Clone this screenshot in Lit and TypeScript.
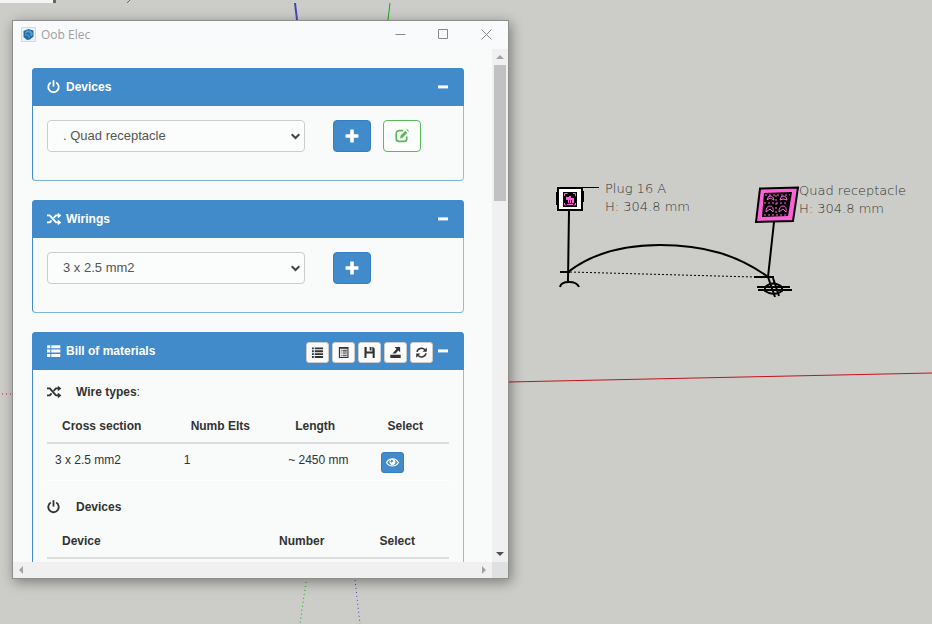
import { LitElement, html, css, svg, nothing } from "lit";
import { customElement, property } from "lit/decorators.js";

const icons: Record<string, unknown> = {
  power: svg`<path d="M3.800 2.600A5.200 5.200 0 1 0 9.200 2.600" fill="none" stroke="currentColor" stroke-width="1.8"/><path d="M5.600.2h1.800v6.400H5.600z"/>`,
  shuffle: svg`<path d="M0 3.4h2.8L9 10.4h2.6M0 10.4h2.8l1.8-2M6.6 5.8 9 3.4h2.6" fill="none" stroke="currentColor" stroke-width="1.9"/><path d="M10.8.8 14.4 3.5 10.8 6.2zM10.8 7.6l3.6 2.8-3.6 2.8z"/>`,
  thlist: svg`<path d="M0 1.200h3.300v3H0zM4.300 1.200h9v3h-9zM0 5.600h3.300v3H0zM4.300 5.600h9v3h-9zM0 10h3.300v3H0zM4.300 10h9v3h-9z"/>`,
  minus: svg`<path d="M2 5.4h10v3H2z"/>`,
  plus: svg`<path d="M5.2.6h3.6v4.6h4.6v3.6H8.8v4.6H5.2V8.8H.6V5.2h4.6z"/>`,
  edit: svg`<path d="M8.400 1.600H4.200A3 3 0 0 0 1.200 4.600v4.800a3 3 0 0 0 3 3h4.600a3 3 0 0 0 3-3V7.400" fill="none" stroke="currentColor" stroke-width="1.700"/><path d="M5 9.600l.6-3L10.400 1.700l2 2L7.600 8.700zM11.400.8l.7-.7 1.900 1.900-.7.700z"/>`,
  list: svg`<path d="M1 1.6h2v2H1zM4 1.6h9v2H4zM1 4.7h2v2H1zM4 4.7h9v2H4zM1 7.8h2v2H1zM4 7.8h9v2H4zM1 10.9h2v2H1zM4 10.9h9v2H4z"/>`,
  listalt: svg`<path d="M2 1h10.4v12H2zM3.2 3v8.8h8V3z" fill-rule="evenodd"/><path d="M4 4h1v1H4zM6 4h4.6v1H6zM4 6h1v1H4zM6 6h4.6v1H6zM4 8h1v1H4zM6 8h4.6v1H6zM4 10h1v1H4zM6 10h4.6v1H6z"/>`,
  save: svg`<path d="M1.600 1h2.400v5h6V1h.8L12.600 2.800v10.200h-2.200V8.200H3.800V13H1.600zM7.200 1h2v3.800h-2z"/>`,
  open: svg`<path d="M1.4 9.4h11.2v3.4H1.4zM6 1.2h6v5.6l-1.9-1.9-3 3.3H3.8l4.3-5z"/>`,
  refresh: svg`<path d="M2.2 6.4A4.8 4.6 0 0 1 10.6 4M11.8 7.8A4.8 4.6 0 0 1 3.4 10.2" fill="none" stroke="currentColor" stroke-width="1.7"/><path d="M12.7 1.6v4.6H8.2zM1.3 12.6V8h4.5z"/>`,
  eye: svg`<path d="M.6 7C3.6 1.7 10.4 1.7 13.4 7 10.4 12 3.6 12 .6 7z" fill="none" stroke="currentColor" stroke-width="1.3"/><path d="M7 3.2a3.3 3.3 0 1 0 .01 0zM5.6 4.2a1.4 1.4 0 1 1-.8 2z" fill-rule="evenodd"/>`,
};

const icon = (name: string) =>
  html`<svg class="icon" viewBox="0 0 14 14" aria-hidden="true">${icons[name]}</svg>`;

const iconStyles = css`
  .icon { width: 14px; height: 14px; fill: currentColor; display: block; overflow: visible; flex: none; }
  button { font: inherit; padding: 0; margin: 0; display: flex; align-items: center; justify-content: center; box-sizing: border-box; cursor: pointer; }
`;

@customElement("oob-panel")
class OobPanel extends LitElement {
  @property() heading = "";
  @property() glyph = "";
  static styles = [iconStyles, css`
    :host { display: block; }
    .panel { border: 1px solid #428bca; border-right-color: #8fbde0; border-bottom-color: #7fb2de; border-radius: 4px; background: #f9fafa; }
    .head { display: flex; align-items: center; height: 38px; margin: -1px -1px 0; padding: 0 14px 0 15px; box-sizing: border-box; background: #428bca; color: #fff; border-radius: 4px 4px 0 0; }
    h2 { margin: 0 auto 0 5px; font-size: 12px; line-height: 16px; font-weight: bold; }
    .fold { border: 0; background: none; color: #fff; }
    .body { padding: 14px 14px 28px; }
  `];
  render() {
    return html`<section class="panel">
      <header class="head">${icon(this.glyph)}<h2>${this.heading}</h2><slot name="tools"></slot>
        <button class="fold" aria-label="Collapse ${this.heading}">${icon("minus")}</button></header>
      <div class="body"><slot></slot></div>
    </section>`;
  }
}

@customElement("plan-scene")
class PlanScene extends LitElement {
  static styles = css`
    :host { display: block; }
    svg { display: block; width: 100%; height: 100%; }
    .label { font: 200 13px "DejaVu Sans", sans-serif; fill: #333; }
    .ink { fill: none; stroke: #000; stroke-width: 2; }
    .thin { fill: none; stroke: #000; stroke-width: 1; }
    .dots { stroke-dasharray: 2 2; }
    .axis { stroke-width: 1; fill: none; }
    .far { stroke-dasharray: 1 3; }
    .red { stroke: #c0151b; }
    .green { stroke: #18a818; }
    .blue { stroke: #4646b8; }
    .bold { stroke-width: 2; }
    .pink { fill: #ff62d8; }
    .pinkline { fill: none; stroke: #ff62d8; stroke-width: 1; }
  `;
  render() {
    return html`<svg role="img" aria-label="Electrical plan">
      <path d="M0 0h53v3H0z" fill="#f4f4f4"/><path d="M53 0h3v3h-3z" fill="#666"/>
      <path class="axis green" d="M127 3l3-3M390 3l-2 17"/>
      <path class="axis green far" d="M306 582l-6 42"/>
      <path class="axis blue bold" d="M295 3l2 17"/>
      <path class="axis blue far" d="M355 580l5 44"/>
      <path class="axis red far" d="M2 394h11"/>
      <path class="axis red" d="M508 382L932 373"/>
      <path class="ink" d="M569 211l-1 70M560 272h10M560 287q1-5 9-5t10 5"/>
      <path class="ink" d="M568 272C594 252 626 245 660 245C704 245 738 255 768 277"/>
      <path class="thin dots" d="M570 272L754 277"/>
      <path class="thin" d="M560 187.5h39"/>
      <path d="M558 188h24v22h-24z" fill="#fff" stroke="#000" stroke-width="2"/>
      <path class="ink" d="M557 192v13M583 191v11"/>
      <path d="M563 192h14v15h-14z"/>
      <path class="pinkline" d="M564.500 196v-2.500h3M573 193.500h2.500v2.500M564.500 203v2h2M575.500 203v2h-2M567 204.500h6"/>
      <path class="pink" d="M566 197h3v-1h2v2h3v5h-2v-3h-1v3h-1v-3h-1v3h-1v-3h-2z"/>
      <path class="pink" d="M760 188.500l38-1-5 33.500-37 1z" stroke="#000" stroke-width="2"/>
      <path d="M764 193l28-1-4 24-26 1z"/>
      <g class="pinkline">
        <path d="M767 200q1-5 4-4t3 4l-4-2zM780 200q1-5 4-4t3 4l-4-1zM766 212q0-6 4-6t3 6l-3-3zM779 212q0-6 4-6t3 6l-3-3z"/>
        <path class="dots" d="M765 195h25M764 203h24M764 215h23M776 195v20"/>
      </g>
      <path class="ink" d="M774 222l-6 55M754 277h20M768 277l7 20M773 278l6 18M757 287h33M758 290h34M765 287q8-7 17 0v4q-8 6-17 0z"/>
      <text class="label" x="605" y="193">Plug 16 A</text>
      <text class="label" x="605" y="211">H: 304.8 mm</text>
      <text class="label" x="799" y="195">Quad receptacle</text>
      <text class="label" x="799" y="213">H: 304.8 mm</text>
    </svg>`;
  }
}

const tools: [string, string][] = [
  ["list", "Show list"], ["listalt", "Show details"], ["save", "Save"], ["open", "Export"], ["refresh", "Refresh"],
];

@customElement("app-root")
class AppRoot extends LitElement {
  static styles = [iconStyles, css`
    :host { display: block; position: relative; min-height: 100vh; overflow: hidden; background: #cccdc8; font: 12px/16px "Liberation Sans", Arial, sans-serif; color: #333; }
    plan-scene { position: absolute; inset: 0; }
    .window { position: absolute; left: 12px; top: 20px; width: 497px; height: 559px; box-sizing: border-box; display: flex; flex-direction: column; background: #f9fafa; border: 1px solid #8e8e8c; box-shadow: 2px 3px 12px rgba(0, 0, 0, 0.4); }
    .titlebar { display: flex; align-items: center; height: 28px; flex: none; padding: 0 8px 2px; box-sizing: border-box; background: #f9fafc; }
    .logo { width: 15px; height: 15px; }
    h1 { margin: 0 auto 0 5px; padding-top: 1px; font: 12px/16px "Open Sans", sans-serif; color: #a0a0a0; }
    .titlebar button { width: 43px; height: 26px; border: 0; background: none; color: #8a8a8a; }
    .titlebar button:last-child { margin-right: -8px; }
    .titlebar .glyph { width: 11px; height: 11px; fill: none; stroke: currentColor; }
    .frame { flex: 1; min-height: 0; display: grid; grid-template-columns: 1fr 16px; grid-template-rows: 1fr 16px; }
    .content { overflow: hidden; min-height: 0; padding: 19px 28px 0 19px; display: flex; flex-direction: column; gap: 19px; }
    .vbar, .hbar { background: #f0f0f0; display: flex; justify-content: space-between; align-items: center; }
    .vbar { flex-direction: column; }
    .thumb { width: 12px; height: 136px; background: #c1c1c1; margin-bottom: auto; }
    .corner { background: #dfe0e0; }
    .arrow { width: 16px; height: 16px; fill: #a3a3a3; display: block; }
    .dark { fill: #505050; }
    .row { display: flex; align-items: center; gap: 12px; }
    .pick { position: relative; width: 258px; margin-right: 16px; }
    select { appearance: none; width: 100%; height: 32px; display: block; box-sizing: border-box; border: 1px solid #ccc; border-radius: 4px; background: #fbfcfc; padding: 0 15px; font: 13px/16px "Liberation Sans", Arial, sans-serif; color: #555; }
    .chevron { position: absolute; right: 5px; top: 13px; width: 9px; height: 7px; fill: none; stroke: #444; stroke-width: 2; pointer-events: none; }
    .add, .edit { width: 38px; height: 32px; border-radius: 4px; border: 1px solid #357ebd; background: #428bca; color: #fff; }
    .edit { border-color: #5cb85c; background: #fcfefc; color: #5cb85c; }
    .tools { display: flex; gap: 3px; margin-right: 3px; }
    .tools button { width: 23px; height: 21px; border: 1px solid #ccc; border-radius: 3px; background: #fbfbfb; color: #333; margin-top: 2px; }
    h3 { display: flex; align-items: center; gap: 15px; margin: 0; font-size: 12px; line-height: 16px; }
    .tools .icon, .see .icon { width: 13px; height: 13px; }
    .light { font-weight: normal; }
    .second { margin-top: 18px; }
    table { width: 100%; margin-top: 10px; border-collapse: separate; border-spacing: 0; table-layout: fixed; }
    th { text-align: left; padding: 8px 0 8px 15px; border-bottom: 2px solid #ddd; }
    td { vertical-align: top; padding: 8px 0 7px 8px; border-bottom: 1px solid #fff; }
    .c1 { width: 32%; } .c2 { width: 26%; } .c3 { width: 23%; } .c4 { width: 19%; }
    .d1 { width: 54%; } .d2 { width: 25%; } .d3 { width: 21%; }
    .see { width: 23px; height: 21px; border: 1px solid #357ebd; border-radius: 3px; background: #428bca; color: #fff; }
  `];

  private picker(label: string, value: string, editable: boolean) {
    return html`<div class="row">
      <div class="pick">
        <select aria-label=${label}><option>${value}</option></select>
        <svg class="chevron" viewBox="0 0 9 7" aria-hidden="true"><path d="M.7 1.200l3.800 3.800 3.800-3.800"/></svg>
      </div>
      <button class="add" aria-label="Add ${label}">${icon("plus")}</button>
      ${editable ? html`<button class="edit" aria-label="Edit ${label}">${icon("edit")}</button>` : nothing}
    </div>`;
  }

  private arrow(d: string, dark = false) {
    return html`<svg class="arrow ${dark ? "dark" : ""}" viewBox="0 0 16 16" aria-hidden="true"><path d=${d}/></svg>`;
  }

  render() {
    return html`<plan-scene></plan-scene>
    <main class="window">
      <div class="titlebar">
        <svg class="logo" viewBox="0 0 15 15" aria-hidden="true">
          <path d="M.5.5h14v14H.5z" fill="#edf3f8" stroke="#cbdbe8"/>
          <path d="M7.500 2l5 1.500v6L9 12.500 6 13l-3.500-3V4z" fill="#1e6fa8"/>
          <path d="M4 6q3-3 6 0v3M4 8q3-1 4 1v2M5 4.500q4-2 6 1v3" fill="none" stroke="#8dbbdc" stroke-width=".7"/>
        </svg>
        <h1>Oob Elec</h1>
        <button aria-label="Minimize"><svg class="glyph" viewBox="0 0 11 11"><path d="M.5 5.500h10"/></svg></button>
        <button aria-label="Maximize"><svg class="glyph" viewBox="0 0 11 11"><path d="M.5.500h9v9h-9z"/></svg></button>
        <button aria-label="Close"><svg class="glyph" viewBox="0 0 11 11"><path d="M.5.5l10 10M10.500.5l-10 10"/></svg></button>
      </div>
      <div class="frame">
        <div class="content">
          <oob-panel heading="Devices" glyph="power">${this.picker("device", ". Quad receptacle", true)}</oob-panel>
          <oob-panel heading="Wirings" glyph="shuffle">${this.picker("wiring", "3 x 2.5 mm2", false)}</oob-panel>
          <oob-panel heading="Bill of materials" glyph="thlist">
            <div class="tools" slot="tools">${tools.map(([g, l]) => html`<button aria-label=${l}>${icon(g)}</button>`)}</div>
            <h3>${icon("shuffle")}<span>Wire types<span class="light">:</span></span></h3>
            <table>
              <colgroup><col class="c1"><col class="c2"><col class="c3"><col class="c4"></colgroup>
              <thead><tr><th>Cross section</th><th>Numb Elts</th><th>Length</th><th>Select</th></tr></thead>
              <tbody><tr><td>3 x 2.5 mm2</td><td>1</td><td>~ 2450 mm</td><td><button class="see" aria-label="Select wires">${icon("eye")}</button></td></tr></tbody>
            </table>
            <h3 class="second">${icon("power")}<span>Devices</span></h3>
            <table>
              <colgroup><col class="d1"><col class="d2"><col class="d3"></colgroup>
              <thead><tr><th>Device</th><th>Number</th><th>Select</th></tr></thead>
            </table>
          </oob-panel>
        </div>
        <div class="vbar">${this.arrow("M8 6l4 4H4z")}<div class="thumb"></div>${this.arrow("M8 10L4 6h8z", true)}</div>
        <div class="hbar">${this.arrow("M6 8l4-4v8z")}${this.arrow("M10 8L6 4v8z")}</div>
        <div class="corner"></div>
      </div>
    </main>`;
  }
}
